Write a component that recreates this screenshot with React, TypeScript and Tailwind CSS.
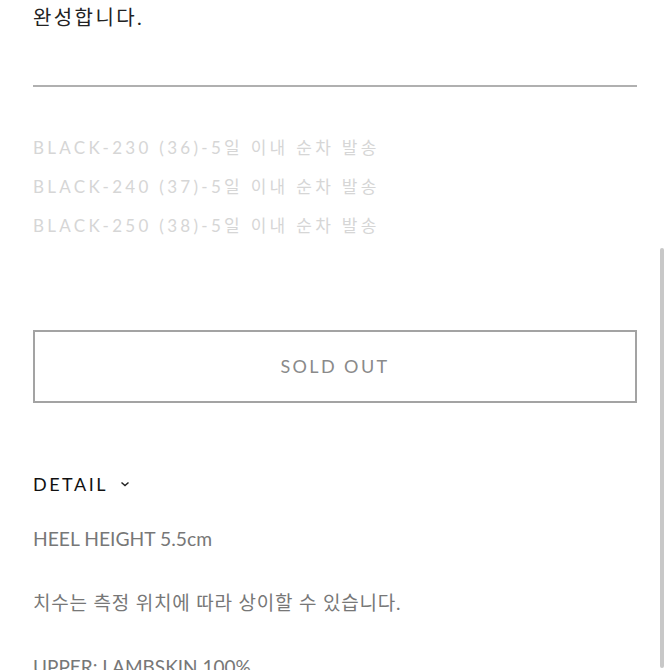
import React from 'react';

const options = [
    'BLACK-230 (36)-5일 이내 순차 발송',
    'BLACK-240 (37)-5일 이내 순차 발송',
    'BLACK-250 (38)-5일 이내 순차 발송',
];

const font = "font-['Lato','Noto_Sans_CJK_KR',sans-serif]";

export default function App() {
    return (
        <div className={`relative h-[670px] w-[670px] overflow-hidden bg-white ${font}`}>
            <div className="px-[33px]">
                {/* description tail */}
                <p className="text-[20px] leading-[36px] tracking-[2.4px] text-[#222] -mt-[1px]">완성합니다.</p>
                <div className="mt-[50px] h-[2px] bg-[#b0b0b0]" />

                {/* variants */}
                <ul className="mt-[41px]">
                    {options.map((o) => (
                        <li key={o} className="text-[17px] leading-[39px] tracking-[3.3px] text-[#d6d6d6]">
                            {o}
                        </li>
                    ))}
                </ul>

                {/* sold out button */}
                <button className="mt-[85px] flex h-[73px] w-full items-center justify-center border-2 border-[#a3a3a3] text-[18px] tracking-[2.4px] text-[#8a8a8a]">
                    SOLD OUT
                </button>

                {/* detail */}
                <div className="mt-[68px] flex items-center gap-[12px]">
                    <span className="text-[18px] leading-[26px] tracking-[2.5px] text-[#111]">DETAIL</span>
                    <svg width="10" height="8" viewBox="0 0 10 8" fill="none" stroke="#222" strokeWidth="1.5">
                        <path d="M1.5 2.5 L5 5.5 L8.5 2.5" />
                    </svg>
                </div>
                <p className="mt-[28px] text-[19.3px] leading-[28px] text-[#777]">HEEL HEIGHT 5.5cm</p>
                <p className="mt-[36px] text-[19px] leading-[28px] tracking-[0.8px] text-[#777]">치수는 측정 위치에 따라 상이할 수 있습니다.</p>
                <p className="mt-[36px] text-[19px] leading-[28px] text-[#777]">UPPER: LAMBSKIN 100%</p>
            </div>

            {/* overlay scrollbar */}
            <div className="absolute right-[6px] top-[248px] h-[420px] w-[4px] rounded-full bg-[#c8c8c8]" />
        </div>
    );
}
